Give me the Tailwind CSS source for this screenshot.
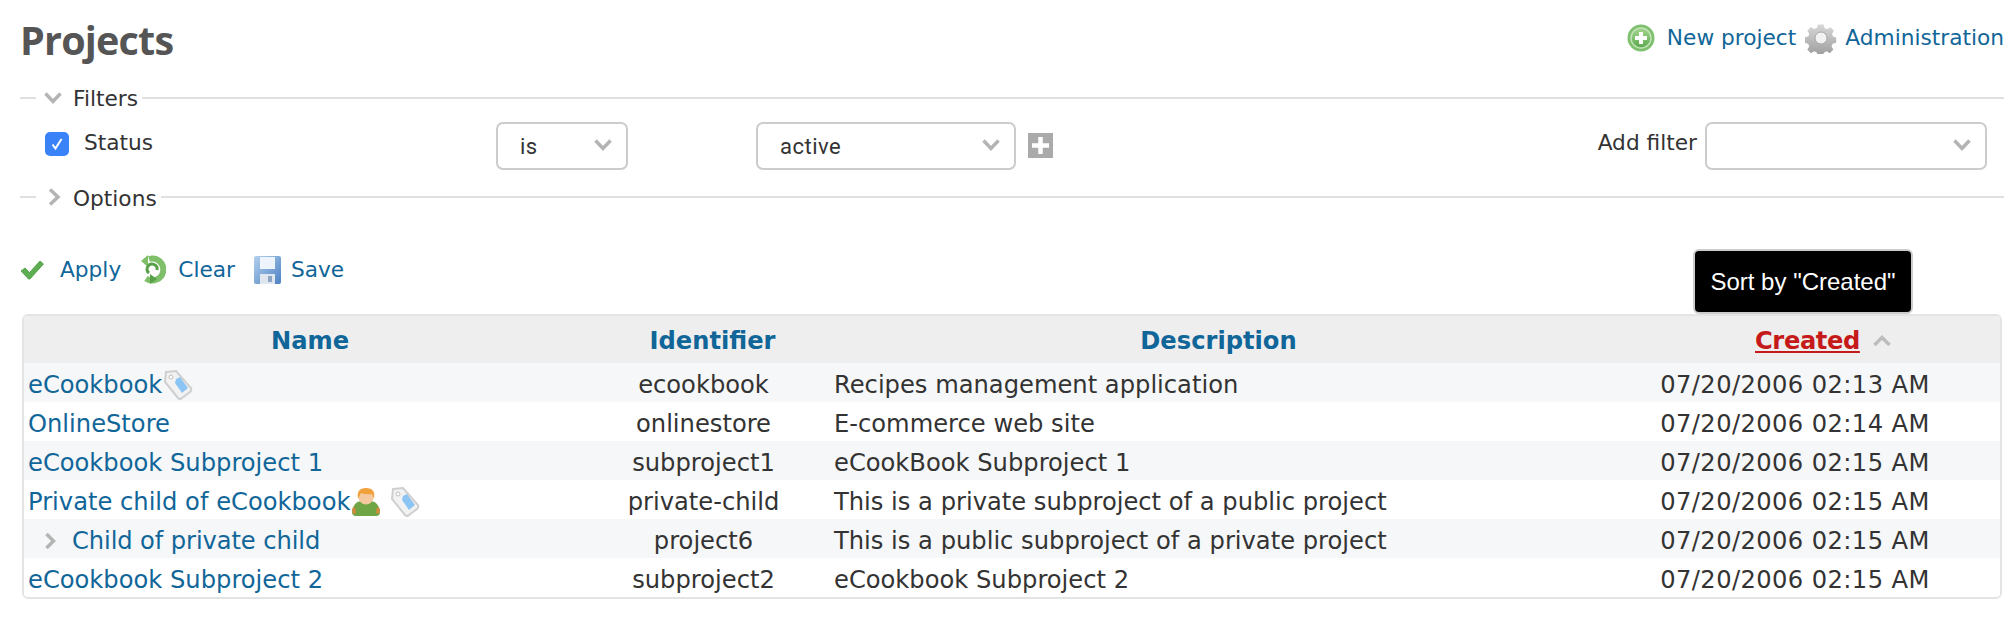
<!DOCTYPE html>
<html lang="en">
<head>
<meta charset="utf-8">
<title>Projects</title>
<script src="https://cdn.jsdelivr.net/npm/@tailwindcss/browser@4"></script>
</head>
<body class="bg-white text-[#333] text-[21.7px] font-['DejaVu_Sans',sans-serif]">
<svg width="0" height="0" class="absolute">
  <defs>
    <linearGradient id="gGreen" x1="0" y1="0" x2="0" y2="1"><stop offset="0" stop-color="#a5d68f"/><stop offset="1" stop-color="#5aa84e"/></linearGradient>
    <linearGradient id="gGear" x1="0" y1="0" x2="0" y2="1"><stop offset="0" stop-color="#d8d8d8"/><stop offset="1" stop-color="#9c9c9c"/></linearGradient>
    <linearGradient id="gSave" x1="0" y1="0" x2="1" y2="1"><stop offset="0" stop-color="#b5d0ee"/><stop offset="1" stop-color="#4b82c4"/></linearGradient>
    <symbol id="tag" viewBox="0 0 30 32">
      <path d="M3 3 L13 2 L28 19 Q29 21 27 23 L19 29 Q17 31 15 29 L2 13 Z" fill="#f2f2f2" stroke="#cfcfcf" stroke-width="2"/>
      <circle cx="8" cy="8" r="2" fill="#fff" stroke="#bdbdbd"/>
      <path d="M13 10 L17 8 L25 19 L19 24 L12 14 Z" fill="#8cc4f4"/>
    </symbol>
  </defs>
</svg>

<div class="relative pl-[20px] pr-[12px] h-[636px]">
  <!-- heading -->
  <div class="flex justify-between items-start h-[87px]">
    <h2 class="mt-[17px] text-[39.500px] leading-[46px] font-bold text-[#555] font-['Open_Sans',sans-serif] tracking-[-0.8px]">Projects</h2>
    <div class="flex items-center mt-[22px] text-[#116699] leading-[32px]">
      <svg width="28" height="28" viewBox="0 0 28 28" class="mr-[12px] blur-[0.4px]"><circle cx="14" cy="14" r="13.5" fill="#7fc06f"/><circle cx="14" cy="14" r="10" fill="url(#gGreen)" stroke="#c2e3b6" stroke-width="1.5"/><path d="M14 8v12M8 14h12" stroke="#fff" stroke-width="4"/></svg>
      <a>New project</a>
      <svg width="32" height="32" viewBox="0 0 32 32" class="ml-[9px] mr-[8px] blur-[0.4px]"><path d="M13 1h6l1 4 3 1.300 3.500-2.200 4 4-2.200 3.500 1.300 3 .4 0 3 .9v6l-4 1-1.300 3 2.200 3.500-4 4-3.500-2.200-3 1.300-1 4h-6l-1-4-3-1.300-3.500 2.200-4-4 2.200-3.500-1.300-3-4-1v-6l4-1 1.300-3-2.200-3.500 4-4 3.500 2.200 3-1.300z" fill="url(#gGear)" transform="translate(1.500 1.500) scale(.9)"/><circle cx="16" cy="16" r="6" fill="#f1f1f1" stroke="#a8a8a8"/></svg>
      <a>Administration</a>
    </div>
  </div>

  <!-- Filters legend -->
  <div class="flex items-center h-[22px]">
    <div class="w-[16px] h-[2px] bg-[#e0e0e0]"></div>
    <svg width="20" height="14" viewBox="0 0 20 14" class="ml-[7px] mr-[10px]"><path d="M2.500 2.500 10 10.500 17.500 2.500" fill="none" stroke="#b4b4b4" stroke-width="3.500"/></svg>
    <span class="leading-[22px] pt-[2px]">Filters</span>
    <div class="flex-1 h-[2px] bg-[#e0e0e0] ml-[4px]"></div>
  </div>

  <!-- Filter row -->
  <div class="flex items-start h-[64px] mt-[13px]">
    <div class="mt-[10px] ml-[25px] w-[24px] h-[24px] rounded-[5px] bg-[#3a82f7] flex items-center justify-center">
      <svg width="16" height="16" viewBox="0 0 16 16"><path d="M3.500 8.500 6.500 12.500 12.500 3" fill="none" stroke="#fff" stroke-width="2"/></svg>
    </div>
    <span class="ml-[15px] mt-[9px] leading-[24px] w-[412px]">Status</span>
    <div class="relative w-[132px] h-[48px]">
      <select class="appearance-none w-full h-full rounded-[7px] border-2 border-[#ccc] bg-white pl-[22px] font-['Roboto',sans-serif] text-[22px] tracking-[0.5px]"><option>is</option></select>
      <svg width="20" height="14" viewBox="0 0 20 14" class="absolute right-[15px] top-[16px]"><path d="M2.500 2.500 10 10.500 17.500 2.500" fill="none" stroke="#b4b4b4" stroke-width="3.500"/></svg>
    </div>
    <div class="relative w-[260px] h-[48px] ml-[128px]">
      <select class="appearance-none w-full h-full rounded-[7px] border-2 border-[#ccc] bg-white pl-[22px] font-['Roboto',sans-serif] text-[22px] tracking-[0.5px]"><option>active</option></select>
      <svg width="20" height="14" viewBox="0 0 20 14" class="absolute right-[15px] top-[16px]"><path d="M2.500 2.500 10 10.500 17.500 2.500" fill="none" stroke="#b4b4b4" stroke-width="3.500"/></svg>
    </div>
    <div class="ml-[12px] mt-[11px] w-[25px] h-[25px] bg-[#aaa] flex items-center justify-center">
      <svg width="17" height="17" viewBox="0 0 17 17"><path d="M8.500 0v17M0 8.500h17" stroke="#fff" stroke-width="4.500"/></svg>
    </div>
    <div class="ml-auto flex items-start mr-[17px]">
      <span class="mt-[9px] leading-[24px] mr-[8px]">Add filter</span>
      <div class="relative w-[282px] h-[48px]">
        <select class="appearance-none w-full h-full rounded-[7px] border-2 border-[#ccc] bg-white"><option></option></select>
        <svg width="20" height="14" viewBox="0 0 20 14" class="absolute right-[15px] top-[16px]"><path d="M2.500 2.500 10 10.500 17.500 2.500" fill="none" stroke="#b4b4b4" stroke-width="3.500"/></svg>
      </div>
    </div>
  </div>

  <!-- Options legend -->
  <div class="flex items-center h-[22px]">
    <div class="w-[16px] h-[2px] bg-[#e0e0e0]"></div>
    <svg width="14" height="20" viewBox="0 0 14 20" class="ml-[11px] mr-[12px]"><path d="M3 2.500 11 10 3 17.500" fill="none" stroke="#b4b4b4" stroke-width="3.500"/></svg>
    <span class="leading-[22px] pt-[3px]">Options</span>
    <div class="flex-1 h-[2px] bg-[#e0e0e0] ml-[4px]"></div>
  </div>

  <!-- Actions -->
  <div class="flex items-center mt-[47px] h-[30px] text-[#116699]">
    <svg width="24" height="20" viewBox="0 0 24 20" class="blur-[0.4px]"><path d="M1 11 5 8 9.500 12.500 20 1 23.500 4 10 19 8.500 19Z" fill="#5cae50" stroke="#4b9a42" stroke-width=".8"/></svg>
    <a class="ml-[16px]">Apply</a>
    <svg width="26" height="30" viewBox="0 0 26 30" class="ml-[19px] blur-[0.4px]"><path d="M9 4A11 11 0 1 1 6 23.500" fill="none" stroke="#7fbf6a" stroke-width="6"/><path d="M8 0 1 6l7 6z" fill="#7fbf6a"/><path d="M17 15A5 5 0 1 0 9 18" fill="none" stroke="#58a148" stroke-width="3"/><path d="M10 29l7-5-7-5z" fill="#58a148"/></svg>
    <a class="ml-[12px]">Clear</a>
    <svg width="27" height="28" viewBox="0 0 27 28" class="ml-[19px] blur-[0.4px]"><rect width="27" height="28" rx="2" fill="url(#gSave)"/><rect x="6" y="1" width="15" height="12" fill="#eef4fb"/><rect x="6" y="18" width="15" height="10" fill="#dfe6ee"/><rect x="14" y="20" width="4" height="6" fill="#8aa5c6"/></svg>
    <a class="ml-[10px]">Save</a>
  </div>

  <!-- Table -->
  <div class="mt-[29px] ml-[2px] w-[1980px] border-2 border-[#e4e4e4] rounded-[6px] overflow-hidden text-[24.2px]">
    <div class="grid grid-cols-[586px_187px_843px_310px] h-[47px] pt-[4px] items-center bg-[#eee] font-bold text-[#116699]">
      <a class="text-center pr-[14px]">Name</a>
      <a class="text-center pl-[18px]">Identifier</a>
      <a class="text-center">Description</a>
      <div class="pl-[115px] flex items-center"><a class="text-[#c61a1a] underline tracking-[-0.4px]">Created</a><svg width="20" height="14" viewBox="0 0 20 14" class="ml-[12px]"><path d="M2.500 11 10 3.500 17.500 11" fill="none" stroke="#bdbdbd" stroke-width="3.500"/></svg></div>
    </div>
    <div class="grid grid-cols-[586px_187px_843px_310px] h-[39px] pt-[4px] items-center bg-[#f6f7f8]">
      <div class="flex items-center pl-[4px] h-[24px]"><a class="text-[#116699]">eCookbook</a><svg width="30" height="32" class="ml-[1px] blur-[0.4px]"><use href="#tag"/></svg></div>
      <div class="text-center">ecookbook</div>
      <div class="pl-[37px]">Recipes management application</div>
      <div class="text-center tracking-[0.4px]">07/20/2006 02:13 AM</div>
    </div>
    <div class="grid grid-cols-[586px_187px_843px_310px] h-[39px] pt-[4px] items-center bg-white">
      <div class="pl-[4px]"><a class="text-[#116699]">OnlineStore</a></div>
      <div class="text-center">onlinestore</div>
      <div class="pl-[37px]">E-commerce web site</div>
      <div class="text-center tracking-[0.4px]">07/20/2006 02:14 AM</div>
    </div>
    <div class="grid grid-cols-[586px_187px_843px_310px] h-[39px] pt-[4px] items-center bg-[#f6f7f8]">
      <div class="pl-[4px]"><a class="text-[#116699]">eCookbook Subproject 1</a></div>
      <div class="text-center">subproject1</div>
      <div class="pl-[37px]">eCookBook Subproject 1</div>
      <div class="text-center tracking-[0.4px]">07/20/2006 02:15 AM</div>
    </div>
    <div class="grid grid-cols-[586px_187px_843px_310px] h-[39px] pt-[4px] items-center bg-white">
      <div class="flex items-center pl-[4px] h-[24px]"><a class="text-[#116699]">Private child of eCookbook</a>
        <svg width="30" height="30" viewBox="0 0 30 30" class="ml-[1px] blur-[0.4px]"><path d="M1 25Q2 15 10 14H20Q28 15 29 25Q29 29 25 29H5Q1 29 1 25Z" fill="#6fa544"/><path d="M1 22 4 20 5 26 2 27ZM29 22 26 20 25 26 28 27Z" fill="#d98a3c"/><circle cx="15" cy="10" r="7.500" fill="#f4c9a0"/><path d="M7 12Q5 1 15 1T23 12L21 7Q15 8 10 6Z" fill="#f0a13c"/></svg>
        <svg width="30" height="32" class="ml-[9px] blur-[0.4px]"><use href="#tag"/></svg></div>
      <div class="text-center">private-child</div>
      <div class="pl-[37px]">This is a private subproject of a public project</div>
      <div class="text-center tracking-[0.4px]">07/20/2006 02:15 AM</div>
    </div>
    <div class="grid grid-cols-[586px_187px_843px_310px] h-[39px] pt-[4px] items-center bg-[#f6f7f8]">
      <div class="flex items-center pl-[20px] h-[24px]"><svg width="12" height="18" viewBox="0 0 12 18"><path d="M2.500 2 9.500 9 2.500 16" fill="none" stroke="#b4b4b4" stroke-width="3.500"/></svg><a class="text-[#116699] ml-[16px] tracking-[-0.1px]">Child of private child</a></div>
      <div class="text-center">project6</div>
      <div class="pl-[37px]">This is a public subproject of a private project</div>
      <div class="text-center tracking-[0.4px]">07/20/2006 02:15 AM</div>
    </div>
    <div class="grid grid-cols-[586px_187px_843px_310px] h-[39px] pt-[4px] items-center bg-white">
      <div class="pl-[4px]"><a class="text-[#116699]">eCookbook Subproject 2</a></div>
      <div class="text-center">subproject2</div>
      <div class="pl-[37px]">eCookbook Subproject 2</div>
      <div class="text-center tracking-[0.4px]">07/20/2006 02:15 AM</div>
    </div>
  </div>

  <!-- Tooltip -->
  <div class="absolute left-[1693px] top-[249px] w-[220px] h-[65px] bg-black border-2 border-[#ccc] rounded-[6px] flex items-center justify-center text-white text-[24px] font-['Liberation_Sans',sans-serif]">Sort by "Created"</div>
</div>
</body>
</html>
